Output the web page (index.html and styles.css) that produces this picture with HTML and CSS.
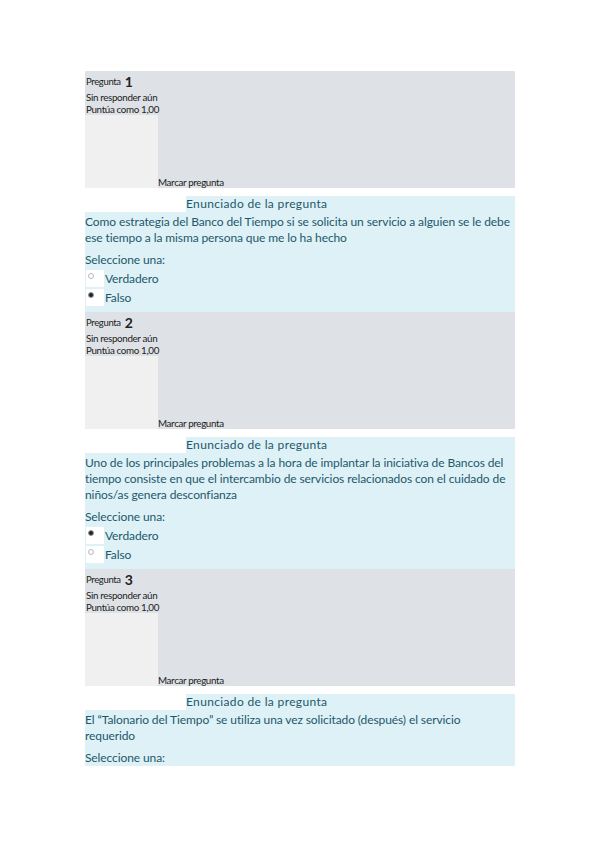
FILE: index.html
```html
<!DOCTYPE html>
<html lang="es">
<head>
<meta charset="utf-8">
<title>Cuestionario</title>
<link rel="stylesheet" href="styles.css">
</head>
<body>
<div class="page">
  <div class="que">
    <div class="info">
      <div class="qno"><span class="lbl">Pregunta</span> <span class="num">1</span></div>
      <div class="state">Sin responder aún</div>
      <div class="grade">Puntúa como 1,00</div>
      <div class="flagrow"><div class="flagbox"></div><span class="flag">Marcar pregunta</span></div>
    </div>
    <div class="content">
      <div class="hdr">Enunciado de la pregunta</div>
      <div class="form">
        <div class="qtext">Como estrategia del Banco del Tiempo si se solicita un servicio a alguien se le debe ese tiempo a la misma persona que me lo ha hecho</div>
        <div class="prompt">Seleccione una:</div>
        <div class="opt"><span class="rb"><span class="radio"></span></span><span>Verdadero</span></div>
        <div class="opt"><span class="rb"><span class="radio on"></span></span><span>Falso</span></div>
      </div>
    </div>
  </div>

  <div class="que">
    <div class="info">
      <div class="qno"><span class="lbl">Pregunta</span> <span class="num">2</span></div>
      <div class="state">Sin responder aún</div>
      <div class="grade">Puntúa como 1,00</div>
      <div class="flagrow"><div class="flagbox"></div><span class="flag">Marcar pregunta</span></div>
    </div>
    <div class="content">
      <div class="hdr">Enunciado de la pregunta</div>
      <div class="form">
        <div class="qtext">Uno de los principales problemas a la hora de implantar la iniciativa de Bancos del tiempo consiste en que el intercambio de servicios relacionados con el cuidado de niños/as genera desconfianza</div>
        <div class="prompt">Seleccione una:</div>
        <div class="opt"><span class="rb"><span class="radio on"></span></span><span>Verdadero</span></div>
        <div class="opt"><span class="rb"><span class="radio"></span></span><span>Falso</span></div>
      </div>
    </div>
  </div>

  <div class="que">
    <div class="info">
      <div class="qno"><span class="lbl">Pregunta</span> <span class="num">3</span></div>
      <div class="state">Sin responder aún</div>
      <div class="grade">Puntúa como 1,00</div>
      <div class="flagrow"><div class="flagbox"></div><span class="flag">Marcar pregunta</span></div>
    </div>
    <div class="content">
      <div class="hdr">Enunciado de la pregunta</div>
      <div class="form last">
        <div class="qtext">El “Talonario del Tiempo” se utiliza una vez solicitado (después) el servicio requerido</div>
        <div class="prompt">Seleccione una:</div>
      </div>
    </div>
  </div>
</div>
</body>
</html>
```

FILE: styles.css
```css
html, body {
  margin: 0;
  padding: 0;
  background: #ffffff;
}
.page {
  margin-left: 85px;
  width: 430px;
  padding-top: 71px;
  font-family: Lato, "Open Sans", sans-serif;
}
.info {
  background: #dee1e5;
  height: 117px;
  color: #222;
  font-size: 9.8px;
  letter-spacing: -0.35px;
  display: flex;
  flex-direction: column;
}
.qno {
  height: 19px;
  display: flex;
  align-items: flex-end;
  padding-left: 1px;
}
.qno .lbl {
  font-size: 9.5px;
  margin-right: 4px;
  padding-bottom: 2px;
}
.qno .num {
  font-size: 14px;
  font-weight: bold;
  line-height: 14px;
}
.state, .grade {
  height: 12px;
  line-height: 12px;
  padding-left: 1px;
}
.state { margin-top: 2px; }
.flagrow {
  display: flex;
  align-items: flex-end;
}
.flagbox {
  width: 73px;
  height: 73px;
  background: #f0f0f0;
}
.flag {
  line-height: 10px;
  padding-bottom: 1px;
}
.content {
  padding-top: 8px;
  color: #1d586a;
  font-size: 12px;
  letter-spacing: -0.1px;
}
.hdr {
  margin-left: 101px;
  background: #def1f7;
  height: 16px;
  line-height: 16px;
  letter-spacing: 0.35px;
}
.form {
  background: #def1f7;
  padding: 2px 2px 6px 0;
}
.form.last {
  padding-bottom: 0;
}
.qtext {
  line-height: 16px;
}
.prompt {
  margin-top: 6px;
  line-height: 16px;
}
.opt {
  display: flex;
  align-items: center;
  height: 18px;
  margin-top: 1px;
}
.rb {
  width: 18px;
  height: 17px;
  background: #ffffff;
  margin-left: 1px;
  margin-right: 1px;
  position: relative;
}
.radio {
  position: absolute;
  left: 2px;
  top: 3px;
  width: 4px;
  height: 4px;
  border: 1px solid #b8b8b8;
  border-radius: 50%;
  background: #fff;
}
.radio.on {
  background: #222;
  border-color: #999;
}
```
